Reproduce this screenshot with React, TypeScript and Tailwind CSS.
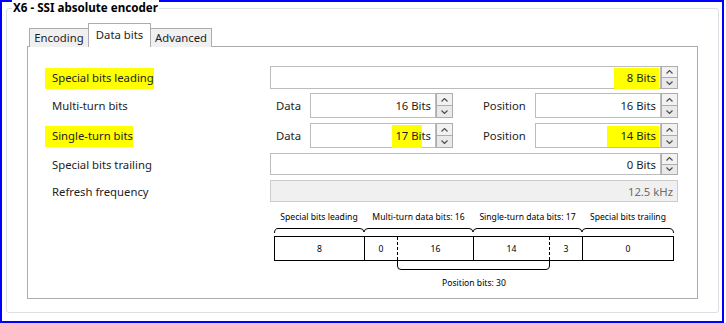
import React from "react";

/* ─── Spinner (up / down buttons) ─── */
function Spin() {
  return (
    <div className="flex w-[17px] shrink-0 flex-col">
      <div className="flex flex-1 items-center justify-center border border-[#adadad] bg-[#f2f2f2]">
        <svg width="7" height="4" viewBox="0 0 7 4">
          <path d="M0.5 3.5 L3.5 0.5 L6.5 3.5" stroke="#505050" strokeWidth="1.2" fill="none" />
        </svg>
      </div>
      <div className="-mt-px flex flex-1 items-center justify-center border border-[#adadad] bg-[#e9e9e9]">
        <svg width="7" height="4" viewBox="0 0 7 4">
          <path d="M0.5 0.5 L3.5 3.5 L6.5 0.5" stroke="#505050" strokeWidth="1.2" fill="none" />
        </svg>
      </div>
    </div>
  );
}

/* ─── Numeric field ─── */
function Field({
  className,
  children,
  spin = true,
  disabled = false,
}: {
  className: string;
  children: React.ReactNode;
  spin?: boolean;
  disabled?: boolean;
}) {
  return (
    <div className={`flex h-full shrink-0 ${className}`}>
      <div
        className={
          disabled
            ? "flex flex-1 items-center justify-end border border-[#cccccc] bg-[#f0f0f0] pr-[4px] pt-[2px] text-[#6d6d6d]"
            : "flex flex-1 items-center justify-end border border-[#bcbcbc] bg-white pr-[4px] pt-[2px]"
        }
      >
        {children}
      </div>
      {spin && <Spin />}
    </div>
  );
}

function Label({ children }: { children: React.ReactNode }) {
  return <div className="flex w-[218px] shrink-0 items-center pt-[2px]">{children}</div>;
}

const HL = "bg-[#ffff00]";

export default function App() {
  return (
    <div className="h-[323px] w-[726px] bg-white font-['Noto_Sans',sans-serif] text-[11.3px] text-[#1e1e1e]">
      <div className="h-[323px] w-[724px] border-2 border-[#0000ff] pl-[4px] pt-[6px]">
        {/* Group box */}
        <div className="relative h-[305px] w-[713px] rounded-[3px] border border-[#dcdfe3] pl-[20px] pt-[15px]">
          <span className="absolute left-[5px] top-[-10px] bg-white px-[1px] text-[11.6px] font-bold leading-[18px] text-black">
            X6 - SSI absolute encoder
          </span>

          {/* Tabs */}
          <div className="relative z-10 flex h-[23px] items-end pl-[2px]">
            <div className="flex h-[19px] w-[60px] items-center justify-center border border-b-0 border-[#acacac] bg-[#f0f0f0]">
              Encoding
            </div>
            <div className="-mx-px flex h-[24px] w-[63px] items-center justify-center border border-b-0 border-[#acacac] bg-white">
              Data bits
            </div>
            <div className="flex h-[19px] w-[62px] items-center justify-center border border-b-0 border-[#acacac] bg-[#f0f0f0]">
              Advanced
            </div>
          </div>

          {/* Tab panel */}
          <div className="-mt-px h-[253px] w-[671px] border border-[#acacac] bg-white pl-[24px] pt-[19px]">
            <div className="flex flex-col">
              <div className="flex h-[23px]">
                <Label>
                  <span className={`${HL} -ml-[7px] py-[2px] pl-[7px]`}>Special bits leading</span>
                </Label>
                <Field className="w-[408px]">
                  <span className={`${HL} -mr-[3px] py-[2px] pl-[13px] pr-[3px]`}>8 Bits</span>
                </Field>
              </div>

              <div className="mt-[4px] flex h-[25px]">
                <Label>Multi-turn bits</Label>
                <div className="flex w-[40px] shrink-0 items-center pl-[6px] pt-[2px]">Data</div>
                <Field className="w-[143px]">16 Bits</Field>
                <div className="ml-[30px] flex w-[52px] shrink-0 items-center pt-[2px]">Position</div>
                <Field className="w-[143px]">16 Bits</Field>
              </div>

              <div className="mt-[5px] flex h-[25px]">
                <Label>
                  <span className={`${HL} -ml-[7px] py-[2px] pl-[7px]`}>Single-turn bits</span>
                </Label>
                <div className="flex w-[40px] shrink-0 items-center pl-[6px] pt-[2px]">Data</div>
                <Field className="w-[143px]">
                  <span className={`${HL} py-[3px] pl-[3px]`}>17 Bi</span>ts
                </Field>
                <div className="ml-[30px] flex w-[52px] shrink-0 items-center pt-[2px]">Position</div>
                <Field className="w-[143px]">
                  <span className={`${HL} -mr-[3px] py-[2px] pl-[13px] pr-[3px]`}>14 Bits</span>
                </Field>
              </div>

              <div className="mt-[5px] flex h-[22px]">
                <Label>Special bits trailing</Label>
                <Field className="w-[408px]">0 Bits</Field>
              </div>

              <div className="mt-[5px] flex h-[22px]">
                <Label>Refresh frequency</Label>
                <Field className="w-[408px]" spin={false} disabled>
                  12.5 kHz
                </Field>
              </div>
            </div>

            {/* Bit layout diagram */}
            <div className="ml-[222px] mt-[8px] w-[400px] text-[8.6px] text-black">
              <div className="flex h-[12px] items-center pt-[2px] leading-none">
                <div className="w-[90px] text-center">Special bits leading</div>
                <div className="w-[109px] text-center">Multi-turn data bits: 16</div>
                <div className="w-[109px] text-center">Single-turn data bits: 17</div>
                <div className="w-[92px] text-center">Special bits trailing</div>
              </div>
              <svg width="400" height="14" viewBox="0 0 400 14" className="block">
                <path
                  d="M0.5 11 Q0.5 6.5 4 6.5 L86 6.5 Q89.5 6.5 90 10 Q90.5 6.5 94 6.5 L195 6.5 Q198.5 6.5 199 10 Q199.5 6.5 203 6.5 L304 6.5 Q307.5 6.5 308 10 Q308.5 6.5 312 6.5 L395 6.5 Q399.5 6.5 399.5 11"
                  stroke="#000"
                  fill="none"
                />
              </svg>
              <div className="flex h-[25px] border border-black pt-[1px]">
                <div className="flex w-[89px] items-center justify-center">8</div>
                <div className="-mt-px flex w-[33px] items-center justify-center border-l border-black pt-px">0</div>
                <div className="-mt-px flex w-[76px] items-center justify-center border-l border-dashed border-black pt-px">16</div>
                <div className="-mt-px flex w-[76px] items-center justify-center border-l border-black pt-px">14</div>
                <div className="-mt-px flex w-[33px] items-center justify-center border-l border-dashed border-black pt-px">3</div>
                <div className="-mt-px flex w-[91px] items-center justify-center border-l border-black pt-px">0</div>
              </div>
              <svg width="400" height="10" viewBox="0 0 400 10" className="block">
                <path
                  d="M123.5 0 L123.5 5 Q123.5 8.5 127 8.5 L272 8.5 Q275.5 8.5 275.5 5 L275.5 0"
                  stroke="#000"
                  fill="none"
                />
              </svg>
              <div className="mt-[6px] text-center leading-[12px]">Position bits: 30</div>
            </div>
          </div>
        </div>
      </div>
    </div>
  );
}
